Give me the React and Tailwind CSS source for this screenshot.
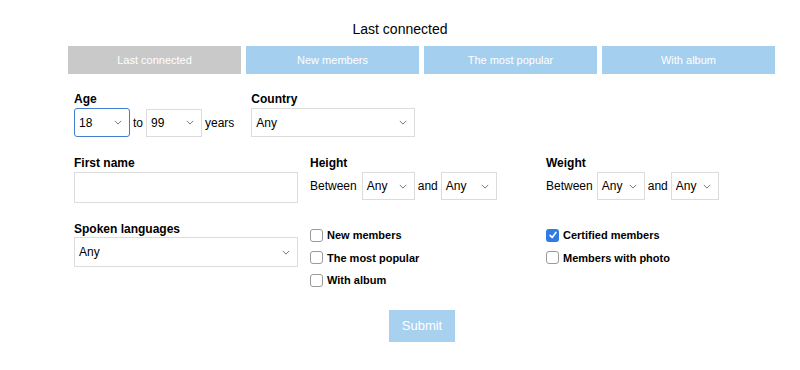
import React from 'react';

const Chevron = () => (
  <svg viewBox="0 0 10 6" className="w-[8px] h-[5px] text-gray-500" fill="none" stroke="currentColor" strokeWidth="1.2">
    <path d="M1 1l4 4 4-4" />
  </svg>
);

function Select({ value, className = '', focused = false }) {
  return (
    <div
      className={`flex items-center justify-between pl-[4px] pr-[7px] bg-white text-[12px] text-black ${
        focused ? 'border-[1.5px] border-[#3f7fce] rounded-[3px]' : 'border border-[#dcdcdc]'
      } ${className}`}
    >
      <span>{value}</span>
      <Chevron />
    </div>
  );
}

function Check({ label, checked = false }) {
  return (
    <div className="flex items-center gap-[4px] h-[22.5px]">
      {checked ? (
        <span className="w-[13px] h-[13px] rounded-[3px] bg-[#2f7ae5] flex items-center justify-center">
          <svg viewBox="0 0 12 12" className="w-[10px] h-[10px]" fill="none" stroke="white" strokeWidth="2" strokeLinecap="round" strokeLinejoin="round">
            <path d="M2.5 6.5l2.5 2.5 4.5-6" />
          </svg>
        </span>
      ) : (
        <span className="w-[13px] h-[13px] rounded-[3px] border border-[#9a9a9a] bg-white" />
      )}
      <span className="text-[11px] font-bold text-black">{label}</span>
    </div>
  );
}

const tabs = [
  { name: 'Last connected', active: true },
  { name: 'New members' },
  { name: 'The most popular' },
  { name: 'With album' },
];

export default function App() {
  return (
    <div className="w-[800px] h-[370px] bg-white font-['Liberation_Sans',Arial,sans-serif] text-black">
      <div className="pt-[19px] text-center text-[14px]">Last connected</div>

      {/* Tabs */}
      <div className="mx-[68px] mt-[6px] w-[707px] grid grid-cols-4 gap-[5px]">
        {tabs.map((t) => (
          <div
            key={t.name}
            className={`h-[28px] flex items-center justify-center text-[11px] text-white ${
              t.active ? 'bg-[#c9c9c9]' : 'bg-[#a5cfef]'
            }`}
          >
            {t.name}
          </div>
        ))}
      </div>

      <div className="ml-[74px] w-[696px] mt-[18px]">
        {/* Row 1 */}
        <div className="flex gap-[17px]">
          <div>
            <div className="text-[12px] font-bold leading-[14px]">Age</div>
            <div className="flex items-center mt-[2px] text-[12px]">
              <Select value="18" focused className="w-[56px] h-[29px]" />
              <span className="mx-[3px]">to</span>
              <Select value="99" className="w-[56px] h-[28px]" />
              <span className="ml-[3px]">years</span>
            </div>
          </div>
          <div>
            <div className="text-[12px] font-bold leading-[14px]">Country</div>
            <Select value="Any" className="mt-[2px] w-[164px] h-[29px]" />
          </div>
        </div>

        {/* Row 2 */}
        <div className="grid grid-cols-[224px_224px_224px] gap-x-[12px] mt-[19px]">
          <div>
            <div className="text-[12px] font-bold leading-[14px]">First name</div>
            <div className="mt-[2px] h-[31px] border border-[#dcdcdc] bg-white" />
          </div>
          <div>
            <div className="text-[12px] font-bold leading-[14px]">Height</div>
            <div className="flex items-center mt-[2px] text-[12px]">
              <span className="mr-[5px]">Between</span>
              <Select value="Any" className="w-[53px] h-[28px]" />
              <span className="mx-[3px]">and</span>
              <Select value="Any" className="w-[56px] h-[28px]" />
            </div>
          </div>
          <div>
            <div className="text-[12px] font-bold leading-[14px]">Weight</div>
            <div className="flex items-center mt-[2px] text-[12px]">
              <span className="mr-[4px]">Between</span>
              <Select value="Any" className="w-[48px] h-[28px]" />
              <span className="mx-[3px]">and</span>
              <Select value="Any" className="w-[48px] h-[28px]" />
            </div>
          </div>
        </div>

        {/* Row 3 */}
        <div className="grid grid-cols-[224px_224px_224px] gap-x-[12px] mt-[19px]">
          <div>
            <div className="text-[12px] font-bold leading-[14px]">Spoken languages</div>
            <Select value="Any" className="mt-[1px] w-[224px] h-[30px]" />
          </div>
          <div className="mt-[2px]">
            <Check label="New members" />
            <Check label="The most popular" />
            <Check label="With album" />
          </div>
          <div className="mt-[2px]">
            <Check label="Certified members" checked />
            <Check label="Members with photo" />
          </div>
        </div>
      </div>

      <div className="flex justify-center mt-[18px] pl-[44px]">
        <div className="w-[66px] h-[32px] bg-[#a8d0ef] text-white text-[13px] flex items-center justify-center">
          Submit
        </div>
      </div>
    </div>
  );
}
